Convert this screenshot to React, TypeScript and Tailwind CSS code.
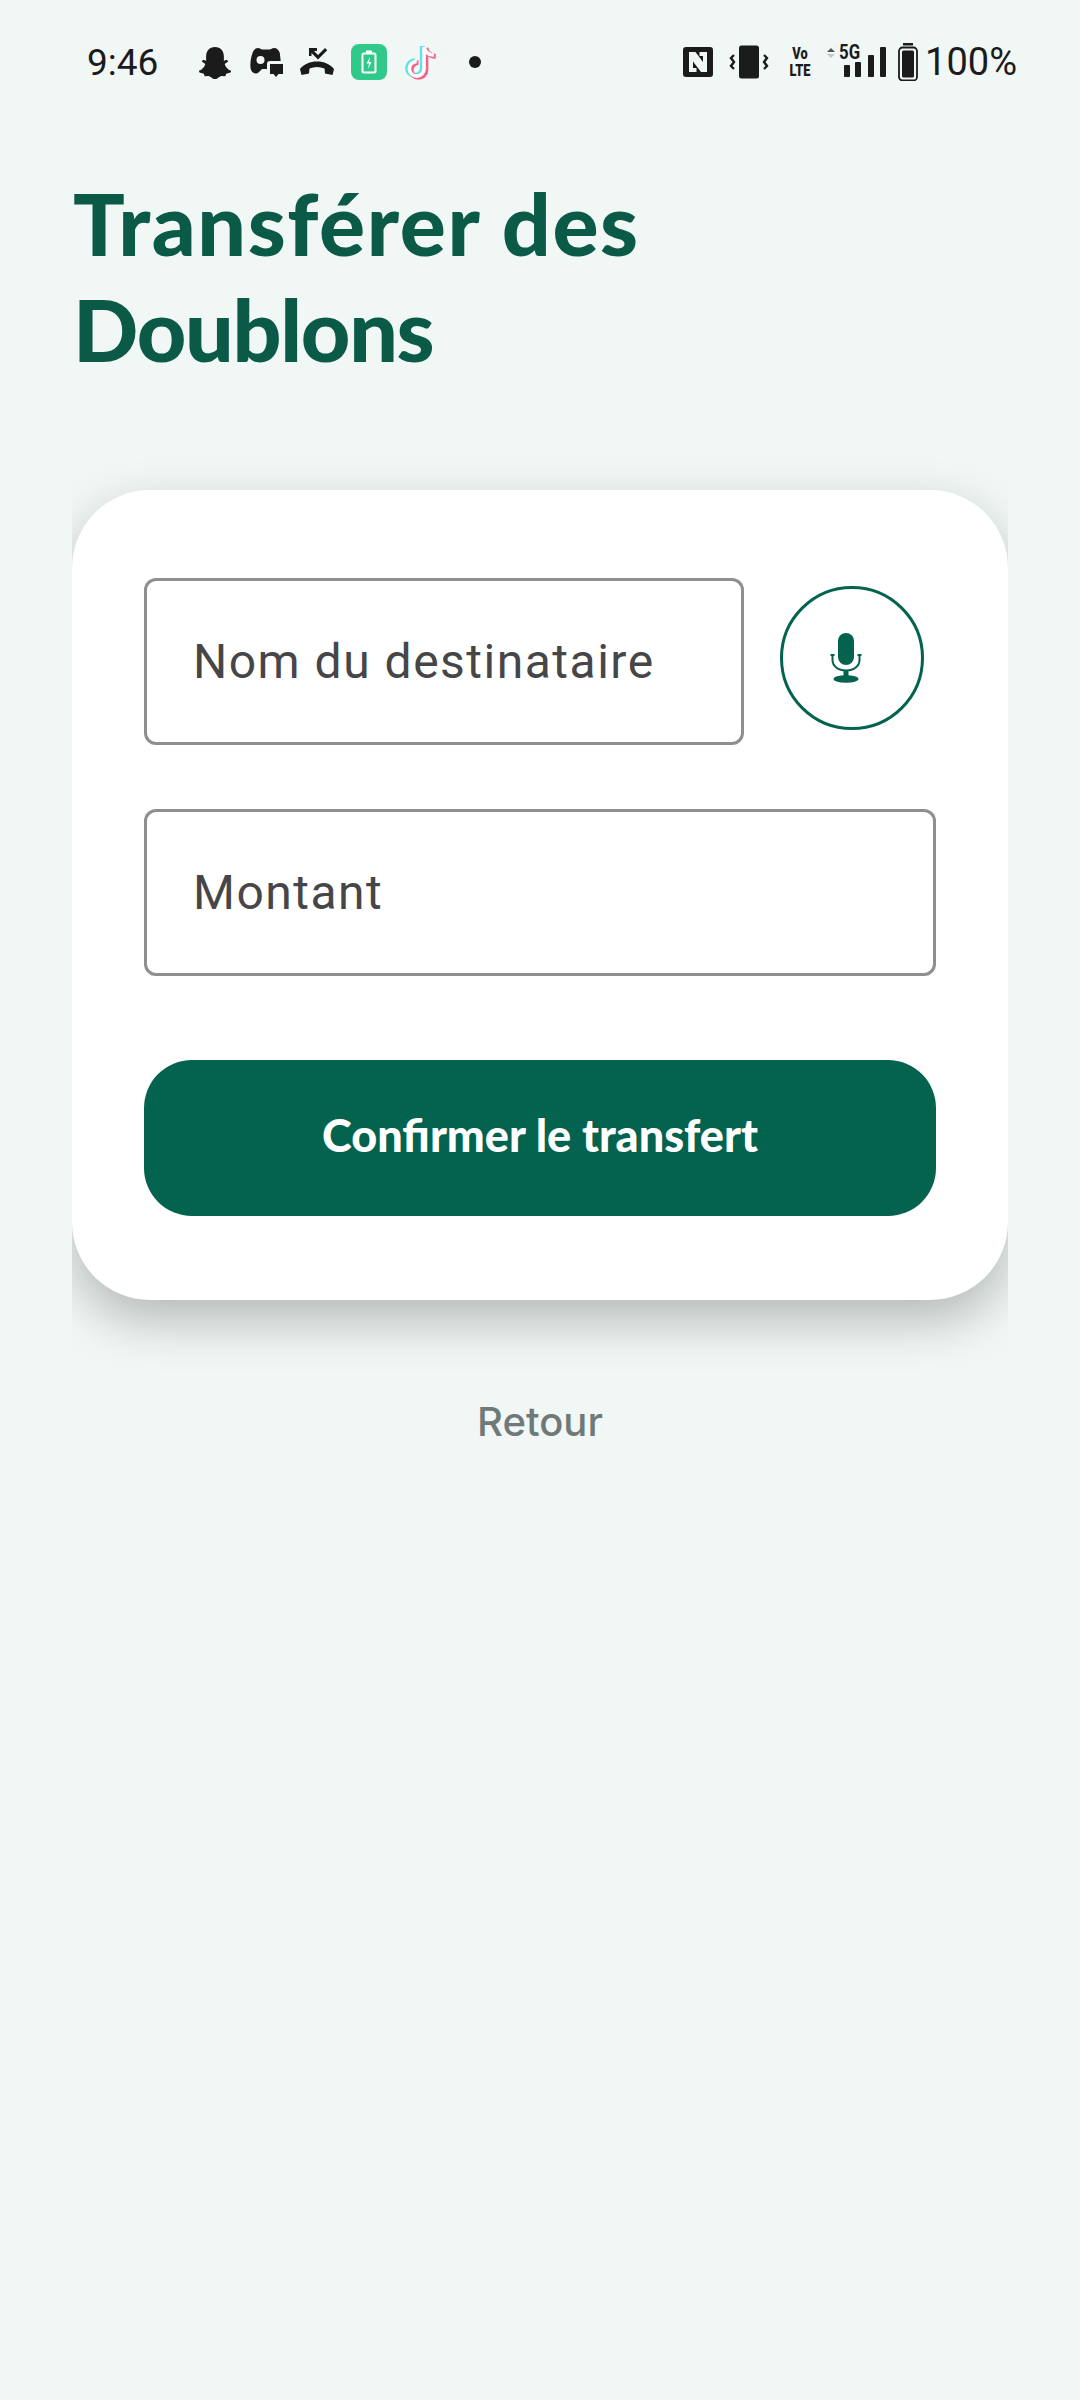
const DARK = "#1b1b1b";

function Snapchat() {
  return (
    <svg width="36" height="33" viewBox="0 0 34 32" fill={DARK}>
      <path d="M17 1c5.500 0 8.600 4 8.600 9v4.200l3-.9 1.200 1.700-3.400 2.400c.8 3 2.900 5.400 6.200 6.700l-.5 1.700-4.300 1-.8 2.600-3.700-.3c-2.200.3-3.600 3.100-6.300 3.100s-4.100-2.800-6.300-3.100l-3.700.3-.8-2.600-4.300-1-.5-1.700c3.300-1.300 5.400-3.700 6.200-6.700l-3.400-2.400 1.200-1.700 3 .9V10c0-5 3.100-9 8.600-9z" />
    </svg>
  );
}

function Controller() {
  return (
    <svg width="34" height="32" viewBox="0 0 34 32" fill={DARK}>
      <path d="M9 2c2 0 3 1.500 4.500 1.500h7C22 3.500 23 2 25 2c3 0 5 2 5.800 5l.9 8H21c-2 0-3 1-3 3v5h-5l-3 3c-1 1-2 1.500-3 1.500C4 27.500 2 25 1.500 22 1 17 2 11 3.500 7 4.500 4 6.500 2 9 2z" />
      <circle cx="11.500" cy="14" r="4" fill="#f1f7f5" />
      <path d="M21 18h13v10h-4.500L27 31l-2.500-3H21z" />
    </svg>
  );
}

function MissedCall() {
  return (
    <svg width="36" height="32" viewBox="0 0 36 32" fill={DARK}>
      <path d="M1 23c4-5 10-7.500 17-7.500S31 18 35 23l-1.500 6-7.500-1.500-.5-5c-2.500-1-5-1.500-7.500-1.500s-5 .5-7.500 1.500l-.5 5L2.500 29z" />
      <path d="M10 2h8v3h-3l4 4 7-7 2.200 2.200-9.200 9.200L12.500 7v3H10z" />
    </svg>
  );
}

function BatteryApp() {
  return (
    <div className="flex h-[36px] w-[36px] items-center justify-center rounded-[8px] bg-[#30c98a]">
      <svg width="16" height="24" viewBox="0 0 16 24" fill="none">
        <rect x="1.500" y="3.500" width="13" height="19" rx="1.500" stroke="#ffffff" strokeWidth="2" />
        <rect x="5" y="0.500" width="6" height="2.500" fill="#ffffff" />
        <path d="M9 7l-3.500 6.500H8L7 19l3.500-7H8z" fill="#ffffff" />
      </svg>
    </div>
  );
}

function TikTok() {
  const d = "M19.500 4v18a6 6 0 1 1-6-6M19.500 4c.5 4 3.500 6.500 8 7";
  return (
    <svg width="36" height="38" viewBox="3 1 28 31" fill="none" strokeWidth="4" strokeLinecap="butt">
      <path d={d} transform="translate(-1.500 -0.500)" stroke="#5fe3e6" />
      <path d={d} transform="translate(1.500 1)" stroke="#f2648a" />
      <path d={d} strokeWidth="3" stroke="#fbfdfd" />
    </svg>
  );
}

function NfcIcon() {
  return (
    <svg width="30" height="30" viewBox="0 0 30 30">
      <rect width="30" height="30" rx="3" fill={DARK} />
      <path d="M6 5h6.500L20 15V9h-3.500V5H24v20h-6L10 14.500V21h3.500v4H6z" fill="#f1f7f5" />
    </svg>
  );
}

function VibrateIcon() {
  return (
    <svg width="40" height="34" viewBox="0 0 40 34" fill="none">
      <rect x="10" y="0.500" width="20" height="33" rx="2.500" fill={DARK} />
      <path d="M5 10l-3 3 3 4-3 4 3 3M35 10l3 3-3 4 3 4-3 3" stroke={DARK} strokeWidth="2.400" />
    </svg>
  );
}

function VoLte() {
  return (
    <div className="flex w-[24px] origin-center scale-x-[0.8] scale-y-[1.05] flex-col items-center text-[16px] font-black leading-[16px] [font-family:'Roboto',sans-serif]">
      <span>Vo</span>
      <span>LTE</span>
    </div>
  );
}

function SignalIcon() {
  return (
    <div className="relative h-[32px] w-[62px]">
      <svg className="absolute left-0 top-0" width="62" height="32" viewBox="0 0 62 32">
        <path d="M2 6l4-4 4 4z" fill="#555555" />
        <path d="M2 8l4 4 4-4z" fill="#c4c8c7" />
        <rect x="19" y="19" width="6" height="12" rx="1" fill={DARK} />
        <rect x="30" y="16" width="6" height="15" rx="1" fill={DARK} />
        <rect x="43" y="9" width="6" height="22" rx="1" fill={DARK} />
        <rect x="55" y="1" width="6" height="30" rx="1" fill={DARK} />
      </svg>
      <span className="absolute left-[14px] top-[-6px] origin-left scale-x-[0.8] text-[21px] font-bold leading-[24px] text-[#1b1b1b] [font-family:'Roboto',sans-serif]">
        5G
      </span>
    </div>
  );
}

function BatteryIcon() {
  return (
    <svg width="20" height="38" viewBox="0 0 20 38" fill="none">
      <rect x="5" y="0" width="10" height="2.500" fill={DARK} />
      <rect x="1" y="4.500" width="18" height="33" rx="3.500" stroke={DARK} strokeWidth="1.800" />
      <rect x="4" y="7.500" width="12" height="27" rx="1.500" fill={DARK} />
    </svg>
  );
}

function StatusBar() {
  return (
    <div className="flex h-[124px] items-center justify-between pl-[87px] pr-[63px] text-[#1b1b1b] [font-family:'Roboto',sans-serif]">
      <div className="flex items-center">
        <span className="w-[110px] text-[37px] leading-none">9:46</span>
        <div className="flex items-center gap-[16px]">
          <Snapchat />
          <Controller />
          <MissedCall />
          <BatteryApp />
          <TikTok />
          <div className="ml-[14px] h-[12px] w-[12px] rounded-full bg-[#1b1b1b]" />
        </div>
      </div>
      <div className="flex items-center">
        <NfcIcon />
        <div className="ml-[16px]">
          <VibrateIcon />
        </div>
        <div className="ml-[19px]">
          <VoLte />
        </div>
        <div className="ml-[13px]">
          <SignalIcon />
        </div>
        <div className="ml-[11px]">
          <BatteryIcon />
        </div>
        <span className="ml-[7px] text-[38px] leading-none">100%</span>
      </div>
    </div>
  );
}

function MicIcon() {
  return (
    <svg width="32" height="50" viewBox="0 0 32 50" fill="none">
      <rect x="8" y="0" width="16" height="32" rx="8" fill="#03634f" />
      <path d="M2.500 21v6c0 6 5.500 10.500 13.500 10.500S29.500 33 29.500 27v-6" stroke="#03634f" strokeWidth="2" />
      <path d="M0.500 22h4M27.500 22h4" stroke="#03634f" strokeWidth="2" />
      <path d="M13.500 37h5v7h-5z" fill="#03634f" />
      <ellipse cx="16" cy="46" rx="12.500" ry="3.800" fill="#03634f" />
    </svg>
  );
}

function Field({ label }: { label: string }) {
  return (
    <div className="flex h-[167px] w-full items-center rounded-[12px] border-[3px] border-[#8f8f8f] bg-white pl-[46px]">
      <span className="text-[48px] leading-none tracking-[1.5px] text-[#464649] [font-family:'Roboto',sans-serif]">
        {label}
      </span>
    </div>
  );
}

export default function App() {
  return (
    <div className="min-h-[2400px] w-[1080px] bg-[#f1f7f5]">
      <StatusBar />

      <h1 className="mt-[46px] pl-[73px] text-[86px] font-black leading-[106px] tracking-[1.6px] text-[#0b5a48] [font-family:'Lato',sans-serif]">
        Transférer des
        <br />
        <span className="tracking-[-1.3px]">Doublons</span>
      </h1>

      <div className="mx-[72px] mt-[60px] overflow-hidden pt-[48px] pb-[80px]">
        <div className="flex h-[810px] flex-col rounded-[78px] bg-white px-[72px] pt-[88px] shadow-[0_20px_50px_rgba(0,0,0,0.25)]">
          <div className="flex items-center">
            <div className="w-[600px]">
              <Field label="Nom du destinataire" />
            </div>
            <div className="ml-[36px] mt-[-7px] flex h-[144px] w-[144px] items-center justify-center rounded-full border-[3px] border-[#03634f] pr-[12px]">
              <MicIcon />
            </div>
          </div>
          <div className="mt-[64px]">
            <Field label="Montant" />
          </div>
          <button className="mt-[84px] h-[156px] w-full rounded-[48px] bg-[#03634f] pb-[4px] text-[45px] font-black text-white [font-family:'Lato',sans-serif]">
            Confirmer le transfert
          </button>
        </div>
      </div>

      <div className="mt-[18px] text-center text-[40px] font-medium leading-[48px] text-[#6f7977] [font-family:'Inter',sans-serif]">
        Retour
      </div>
    </div>
  );
}
